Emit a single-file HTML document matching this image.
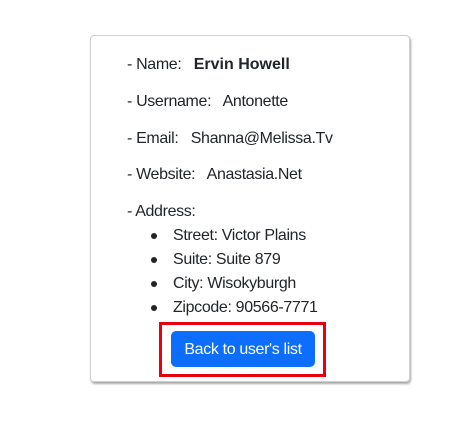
<!DOCTYPE html>
<html><head><style>
body{margin:0;background:#fff;font-family:"Liberation Sans",sans-serif;color:#212529;font-size:16px;letter-spacing:-0.35px;}
.card{position:absolute;left:90px;top:35px;width:320px;height:347px;border:1px solid #d0d0d0;border-radius:4px;box-shadow:1px 2px 2px rgba(0,0,0,.35);box-sizing:border-box;}
.t{position:absolute;left:127px;white-space:pre;line-height:20px;}
.t b{letter-spacing:0;}
.b{position:absolute;left:151px;width:6px;height:6px;border-radius:50%;background:#212529;}
.li{position:absolute;left:173px;white-space:pre;line-height:20px;}
.red{position:absolute;left:159px;top:322px;width:167px;height:55px;border:3px solid #e8000f;box-sizing:border-box;}
.btn{position:absolute;left:171px;top:331px;width:144px;height:36px;background:#0d6efd;border-radius:5px;color:#fff;font-size:16px;line-height:37px;text-align:center;}
</style></head><body>
<div class="card"></div>
<div class="t" style="top:55px">- Name:   <b>Ervin Howell</b></div>
<div class="t" style="top:92px">- Username:   Antonette</div>
<div class="t" style="top:129px">- Email:   Shanna@Melissa.Tv</div>
<div class="t" style="top:165px">- Website:   Anastasia.Net</div>
<div class="t" style="top:202px">- Address:</div>
<div class="b" style="top:233px"></div><div class="li" style="top:226px">Street: Victor Plains</div>
<div class="b" style="top:257px"></div><div class="li" style="top:250px">Suite: Suite 879</div>
<div class="b" style="top:281px"></div><div class="li" style="top:274px">City: Wisokyburgh</div>
<div class="b" style="top:305px"></div><div class="li" style="top:298px">Zipcode: 90566-7771</div>
<div class="red"></div>
<div class="btn">Back to user's list</div>
</body></html>
